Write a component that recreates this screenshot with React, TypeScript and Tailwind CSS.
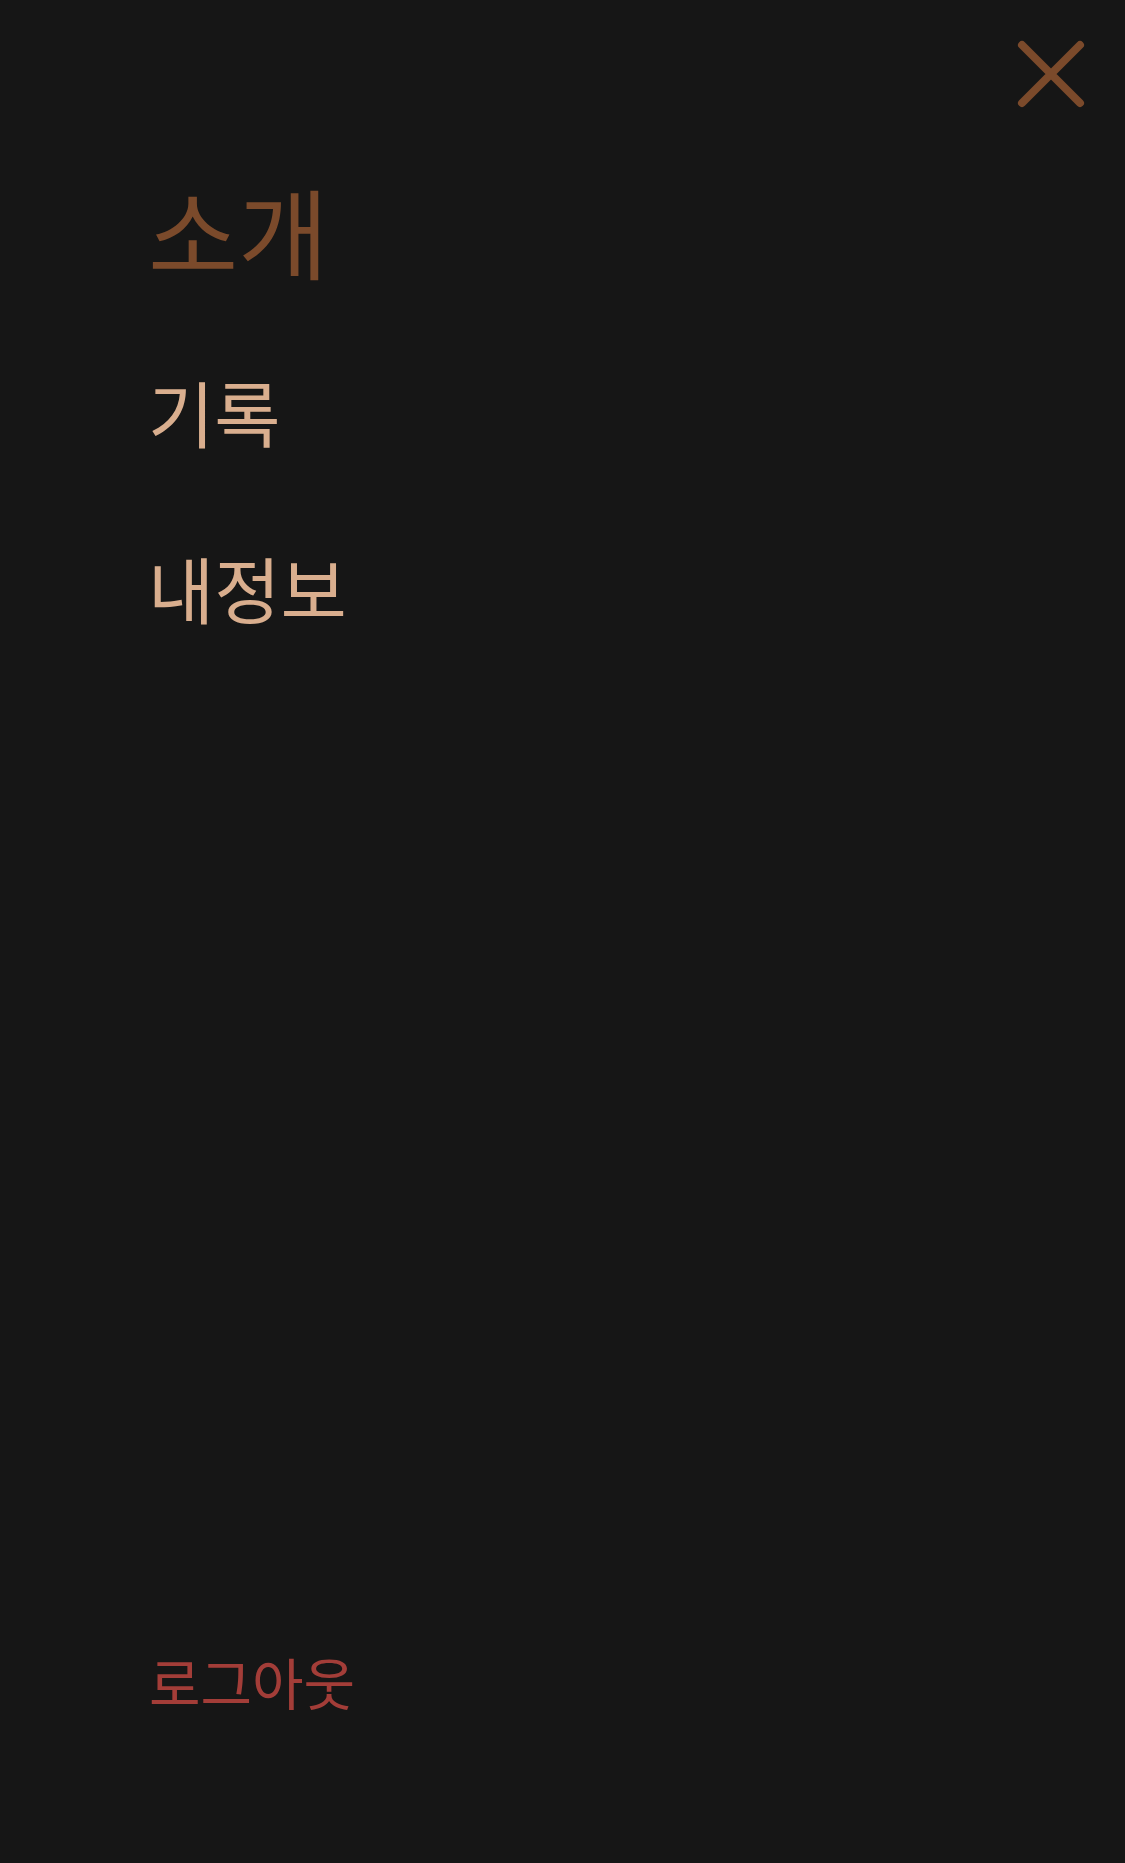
import { useState } from 'react'

const font = { fontFamily: '"Noto Sans CJK KR", "Noto Sans", sans-serif' }

export default function App() {
  const [active] = useState('소개')

  return (
    <div className="w-full h-[1863px] bg-[#161616] flex flex-col" style={font}>
      {/* Close button */}
      <div className="flex justify-end pt-[40px] pr-[40px]">
        <button aria-label="닫기" className="w-[68px] h-[68px] flex items-center justify-center">
          <svg width="68" height="68" viewBox="0 0 68 68" fill="none">
            <path d="M5 5L63 63M63 5L5 63" stroke="#7B4A2B" strokeWidth="8" strokeLinecap="round" />
          </svg>
        </button>
      </div>

      {/* Menu */}
      <nav className="flex flex-col items-start pl-[148px] mt-[72px]">
        <a className={`text-[98px] leading-none ${active === '소개' ? 'text-[#7B4A2B]' : 'text-[#D9AE8E]'}`}>소개</a>
        <a className="text-[72px] leading-none text-[#D9AE8E] mt-[97px]">기록</a>
        <a className="text-[72px] leading-none text-[#D9AE8E] mt-[104px]">내정보</a>
      </nav>

      {/* Logout */}
      <div className="mt-auto pl-[149px] pb-[153px]">
        <button className="text-[56px] leading-none text-[#A33D38]">로그아웃</button>
      </div>
    </div>
  )
}
